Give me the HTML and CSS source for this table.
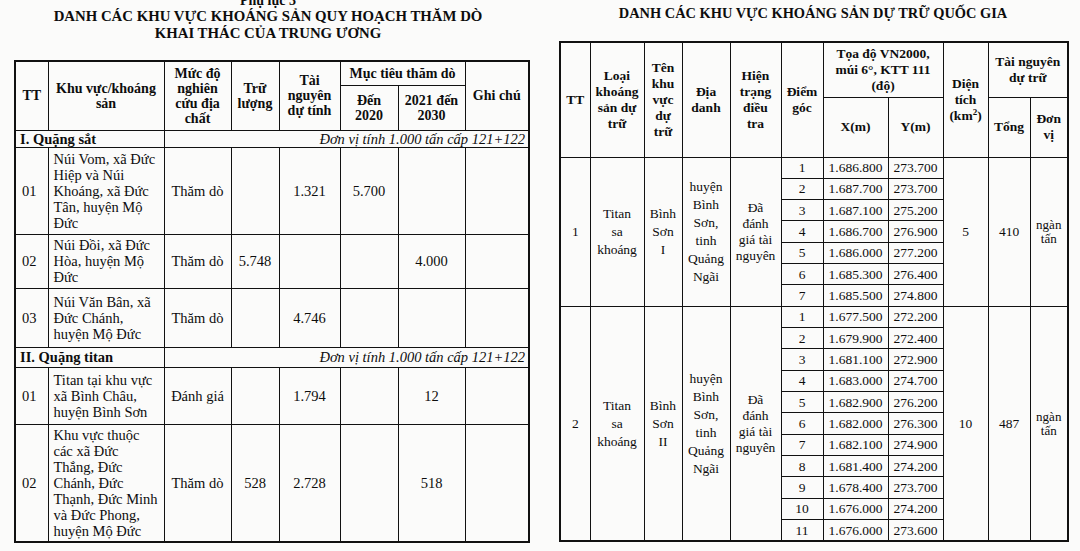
FILE: index.html
```html
<!DOCTYPE html>
<html lang="vi">
<head>
<meta charset="utf-8">
<title>Danh các khu vực khoáng sản</title>
<link rel="stylesheet" href="styles.css">
</head>
<body>
<div class="page">
  <section class="panel panel-left">
    <div class="title title-left">
      <div class="title-cut">Phụ lục 3</div>
      <div>DANH CÁC KHU VỰC KHOÁNG SẢN QUY HOẠCH THĂM DÒ</div>
      <div>KHAI THÁC CỦA TRUNG ƯƠNG</div>
    </div>
    <table class="grid grid-left">
      <colgroup>
        <col class="c-tt"><col class="c-kv"><col class="c-md"><col class="c-tl"><col class="c-tn"><col class="c-d20"><col class="c-d30"><col class="c-gc">
      </colgroup>
      <thead>
        <tr class="lh1">
          <th rowspan="2">TT</th>
          <th rowspan="2">Khu vực/khoáng<br>sản</th>
          <th rowspan="2">Mức độ<br>nghiên<br>cứu địa<br>chất</th>
          <th rowspan="2">Trữ<br>lượng</th>
          <th rowspan="2">Tài<br>nguyên<br>dự tính</th>
          <th colspan="2">Mục tiêu thăm dò</th>
          <th rowspan="2">Ghi chú</th>
        </tr>
        <tr class="lh2">
          <th>Đến<br>2020</th>
          <th>2021 đến<br>2030</th>
        </tr>
      </thead>
      <tbody>
        <tr class="sec sec-1">
          <td colspan="2" class="sec-name">I. Quặng sắt</td>
          <td colspan="6" class="unit">Đơn vị tính 1.000 tấn cấp 121+122</td>
        </tr>
        <tr class="row-5">
          <td class="tt">01</td>
          <td class="name">Núi Vom, xã Đức<br>Hiệp và Núi<br>Khoáng, xã Đức<br>Tân, huyện Mộ<br>Đức</td>
          <td>Thăm dò</td><td></td><td>1.321</td><td>5.700</td><td></td><td></td>
        </tr>
        <tr class="row-3a">
          <td class="tt">02</td>
          <td class="name">Núi Đồi, xã Đức<br>Hòa, huyện Mộ<br>Đức</td>
          <td>Thăm dò</td><td>5.748</td><td></td><td></td><td>4.000</td><td></td>
        </tr>
        <tr class="row-3b">
          <td class="tt">03</td>
          <td class="name">Núi Văn Bân, xã<br>Đức Chánh,<br>huyện Mộ Đức</td>
          <td>Thăm dò</td><td></td><td>4.746</td><td></td><td></td><td></td>
        </tr>
        <tr class="sec sec-2">
          <td colspan="2" class="sec-name">II. Quặng titan</td>
          <td colspan="6" class="unit">Đơn vị tính 1.000 tấn cấp 121+122</td>
        </tr>
        <tr class="row-3c">
          <td class="tt">01</td>
          <td class="name">Titan tại khu vực<br>xã Bình Châu,<br>huyện Bình Sơn</td>
          <td>Đánh giá</td><td></td><td>1.794</td><td></td><td>12</td><td></td>
        </tr>
        <tr class="row-7">
          <td class="tt">02</td>
          <td class="name">Khu vực thuộc<br>các xã Đức<br>Thắng, Đức<br>Chánh, Đức<br>Thạnh, Đức Minh<br>và Đức Phong,<br>huyện Mộ Đức</td>
          <td>Thăm dò</td><td>528</td><td>2.728</td><td></td><td>518</td><td></td>
        </tr>
      </tbody>
    </table>
  </section>

  <section class="panel panel-right">
    <div class="title title-right">
      <div>DANH CÁC KHU VỰC KHOÁNG SẢN DỰ TRỮ QUỐC GIA</div>
    </div>
    <table class="grid grid-right">
      <colgroup>
        <col class="d-tt"><col class="d-loai"><col class="d-ten"><col class="d-dd"><col class="d-ht"><col class="d-dg"><col class="d-x"><col class="d-y"><col class="d-dt"><col class="d-tong"><col class="d-dv">
      </colgroup>
      <thead>
        <tr class="rh1">
          <th rowspan="2">TT</th>
          <th rowspan="2">Loại<br>khoáng<br>sản dự<br>trữ</th>
          <th rowspan="2">Tên<br>khu<br>vực<br>dự<br>trữ</th>
          <th rowspan="2">Địa<br>danh</th>
          <th rowspan="2">Hiện<br>trạng<br>điều<br>tra</th>
          <th rowspan="2">Điểm<br>góc</th>
          <th colspan="2">Tọa độ VN2000,<br>múi 6°, KTT 111<br>(độ)</th>
          <th rowspan="2">Diện<br>tích<br>(km<sup>2</sup>)</th>
          <th colspan="2">Tài nguyên<br>dự trữ</th>
        </tr>
        <tr class="rh2">
          <th>X(m)</th><th>Y(m)</th><th>Tổng</th><th>Đơn<br>vị</th>
        </tr>
      </thead>
      <tbody>
        <tr>
          <td rowspan="7">1</td>
          <td rowspan="7" class="sp">Titan<br>sa<br>khoáng</td>
          <td rowspan="7" class="sp">Bình<br>Sơn<br>I</td>
          <td rowspan="7" class="sp">huyện<br>Bình<br>Sơn,<br>tinh<br>Quảng<br>Ngãi</td>
          <td rowspan="7" class="sp tight">Đã<br>đánh<br>giá tài<br>nguyên</td>
          <td>1</td><td>1.686.800</td><td>273.700</td>
          <td rowspan="7">5</td>
          <td rowspan="7">410</td>
          <td rowspan="7" class="unit-small">ngàn<br>tấn</td>
        </tr>
        <tr><td>2</td><td>1.687.700</td><td>273.700</td></tr>
        <tr><td>3</td><td>1.687.100</td><td>275.200</td></tr>
        <tr><td>4</td><td>1.686.700</td><td>276.900</td></tr>
        <tr><td>5</td><td>1.686.000</td><td>277.200</td></tr>
        <tr><td>6</td><td>1.685.300</td><td>276.400</td></tr>
        <tr><td>7</td><td>1.685.500</td><td>274.800</td></tr>
        <tr>
          <td rowspan="11">2</td>
          <td rowspan="11" class="sp">Titan<br>sa<br>khoáng</td>
          <td rowspan="11" class="sp">Bình<br>Sơn<br>II</td>
          <td rowspan="11" class="sp">huyện<br>Bình<br>Sơn,<br>tinh<br>Quảng<br>Ngãi</td>
          <td rowspan="11" class="sp tight">Đã<br>đánh<br>giá tài<br>nguyên</td>
          <td>1</td><td>1.677.500</td><td>272.200</td>
          <td rowspan="11">10</td>
          <td rowspan="11">487</td>
          <td rowspan="11" class="unit-small">ngàn<br>tấn</td>
        </tr>
        <tr><td>2</td><td>1.679.900</td><td>272.400</td></tr>
        <tr><td>3</td><td>1.681.100</td><td>272.900</td></tr>
        <tr><td>4</td><td>1.683.000</td><td>274.700</td></tr>
        <tr><td>5</td><td>1.682.900</td><td>276.200</td></tr>
        <tr><td>6</td><td>1.682.000</td><td>276.300</td></tr>
        <tr><td>7</td><td>1.682.100</td><td>274.900</td></tr>
        <tr><td>8</td><td>1.681.400</td><td>274.200</td></tr>
        <tr><td>9</td><td>1.678.400</td><td>273.700</td></tr>
        <tr><td>10</td><td>1.676.000</td><td>274.200</td></tr>
        <tr><td>11</td><td>1.676.000</td><td>273.600</td></tr>
      </tbody>
    </table>
  </section>
</div>
</body>
</html>
```

FILE: styles.css
```css
html, body {
  margin: 0;
  padding: 0;
}
body {
  background: #fbfbfa;
  color: #0d0d0d;
  font-family: "Liberation Serif", "Times New Roman", serif;
  overflow: hidden;
}
.page {
  display: flex;
  width: 1080px;
  height: 551px;
  overflow: hidden;
}
.panel {
  width: 540px;
  flex: none;
}

/* titles */
.title {
  text-align: center;
  font-weight: bold;
  font-size: 14.8px;
  line-height: 17px;
}
.title-left {
  margin-top: -6px;
  margin-right: 4px;
}
.title-right {
  margin-top: 5px;
  margin-left: 6px;
  font-size: 14.4px;
}
.title-cut {
  font-size: 14px;
  line-height: 14px;
}

/* tables */
.grid {
  border-collapse: collapse;
  table-layout: fixed;
  border: 2px solid #111;
}
.grid th,
.grid td {
  border: 1px solid #111;
  padding: 0 3px;
  text-align: center;
  vertical-align: middle;
  overflow: hidden;
  white-space: nowrap;
}
.grid th {
  font-weight: bold;
}

/* left table */
.grid-left {
  width: 514px;
  margin-left: 14px;
  margin-top: 18px;
  font-size: 14.5px;
  line-height: 16px;
}
.grid-left th {
  font-size: 14px;
  line-height: 15px;
}
.c-tt { width: 33px; }
.c-kv { width: 116px; }
.c-md { width: 67px; }
.c-tl { width: 48px; }
.c-tn { width: 61px; }
.c-d20 { width: 58px; }
.c-d30 { width: 67px; }
.c-gc { width: 64px; }
.lh1 { height: 24px; }
.lh2 { height: 45px; }
.grid-left .tt {
  text-align: left;
  padding-left: 6px;
}
.grid-left .name {
  text-align: left;
  padding-left: 5px;
}
.sec-1 { height: 17px; }
.sec-2 { height: 20px; }
.sec-name {
  font-weight: bold;
  text-align: left !important;
  padding-left: 4px !important;
}
.unit {
  font-style: italic;
  text-align: right !important;
  padding-right: 3px !important;
}
.row-5 { height: 87px; }
.row-3a { height: 54px; }
.row-3b { height: 59px; }
.row-3c { height: 57px; }
.row-7 { height: 118px; }

/* right table */
.grid-right {
  width: 508px;
  margin-left: 19px;
  margin-top: 19px;
  font-size: 13.5px;
  line-height: 17px;
}
.grid-right th {
  line-height: 16px;
}
.d-tt { width: 30px; }
.d-loai { width: 54px; }
.d-ten { width: 38px; }
.d-dd { width: 48px; }
.d-ht { width: 51px; }
.d-dg { width: 42px; }
.d-x { width: 65px; }
.d-y { width: 55px; }
.d-dt { width: 45px; }
.d-tong { width: 42px; }
.d-dv { width: 38px; }
.rh1 { height: 55px; }
.rh2 { height: 60px; }
.grid-right tbody td {
  height: 20.33px;
  padding: 0 2px;
}
.grid-right .sp {
  line-height: 18px;
}
.grid-right .tight {
  line-height: 16px;
}
.grid-right .unit-small {
  font-size: 13px;
  line-height: 14px;
}
sup {
  font-size: 9px;
  line-height: 0;
}
```
